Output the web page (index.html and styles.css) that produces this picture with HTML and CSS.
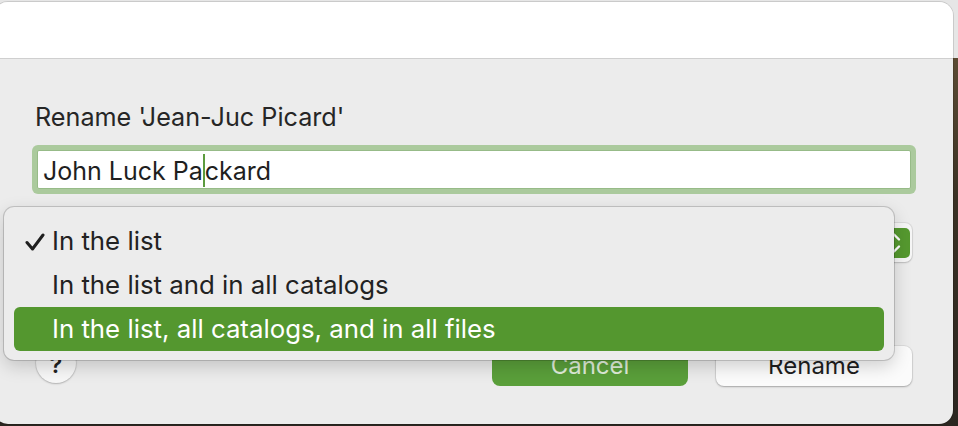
FILE: index.html
```html
<!DOCTYPE html>
<html>
<head>
<meta charset="utf-8">
<link rel="stylesheet" href="styles.css">
</head>
<body>
<div class="window">
  <div class="titlebar"></div>
  <div class="content">
    <div class="label">Rename 'Jean-Juc Picard'</div>
    <div class="field">John Luck Pa<span class="caret"></span>ckard</div>
    <div class="popup-row">
      <div class="popup">
        <div class="arrows">
          <svg width="32" height="30" viewBox="0 0 32 30"><path d="M11 11.5 L16 6.5 L21 11.5 M11 18.5 L16 23.5 L21 18.5" fill="none" stroke="#fff" stroke-width="2.4" stroke-linecap="round" stroke-linejoin="round"/></svg>
        </div>
      </div>
    </div>
    <div class="buttons">
      <div class="help">?</div>
      <div class="spacer"></div>
      <div class="btn cancel">Cancel</div>
      <div class="btn rename">Rename</div>
    </div>
  </div>
  <div class="menu">
    <div class="item"><svg class="check" width="20" height="18" viewBox="0 0 20 18"><path d="M2 9.5 L7.5 16 L18 2" fill="none" stroke="#1f1f1f" stroke-width="3" stroke-linecap="round" stroke-linejoin="round"/></svg>In the list</div>
    <div class="item">In the list and in all catalogs</div>
    <div class="item selected">In the list, all catalogs, and in all files</div>
  </div>
</div>
</body>
</html>
```
FILE: styles.css
```css
html, body {
  margin: 0;
  padding: 0;
}
body {
  width: 958px;
  height: 426px;
  overflow: hidden;
  background: linear-gradient(to bottom, #e6e6e6 0, #e6e6e6 58px, #5b4b33 58px, #3a3124 200px, #2b2620 426px);
  font-family: "Inter", "Noto Sans", sans-serif;
}
.window {
  position: relative;
  margin: 2px 0 0 -6px;
  width: 959px;
  height: 422px;
  border-radius: 14px;
  overflow: hidden;
  background: #ececec;
  box-shadow: 0 0 0 1px rgba(0,0,0,0.12);
}
.titlebar {
  height: 56px;
  background: #ffffff;
  border-bottom: 1px solid #cfcfcf;
}
.content {
  padding: 0 41px 0 43px;
  display: flex;
  flex-direction: column;
}
.label {
  margin-top: 43px;
  margin-left: -2px;
  font-size: 25.2px;
  line-height: 30px;
  color: #262626;
}
.field {
  margin-top: 18px;
  margin-right: 1px;
  height: 37px;
  background: #fff;
  border: 1px solid #97bb88;
  border-radius: 2px;
  box-shadow: 0 0 0 5px #abca9d;
  padding-left: 5px;
  font-size: 25px;
  line-height: 40px;
  color: #1f1f1f;
  white-space: nowrap;
}
.caret {
  display: inline-block;
  width: 2px;
  height: 33px;
  background: #5c9b3e;
  vertical-align: -7px;
}
.popup-row {
  margin-top: 34px;
  display: flex;
}
.popup {
  flex: 1;
  height: 39px;
  border-radius: 7px;
  background: #f6f6f6;
  box-shadow: 0 0 0 1px rgba(0,0,0,0.07), 0 1px 2px rgba(0,0,0,0.15);
  display: flex;
  align-items: center;
  justify-content: flex-end;
  padding-right: 2px;
}
.arrows {
  width: 32px;
  height: 30px;
  border-radius: 5px;
  background: #55992f;
  display: flex;
}
.buttons {
  margin-top: 84px;
  display: flex;
  align-items: center;
  height: 40px;
}
.help {
  box-sizing: border-box;
  width: 40px;
  height: 40px;
  margin-left: -1px;
  margin-top: -6px;
  padding-top: 5px;
  border-radius: 50%;
  background: #f7f7f7;
  box-shadow: 0 0 0 1px rgba(0,0,0,0.06), 0 1px 2px rgba(0,0,0,0.2);
  text-align: center;
  font-size: 23px;
  font-weight: 600;
  line-height: 35px;
  color: #222;
}
.spacer {
  flex: 1;
}
.btn {
  width: 196px;
  height: 40px;
  border-radius: 8px;
  text-align: center;
  font-size: 24px;
  line-height: 40px;
}
.cancel {
  background: #5a9f3a;
  color: rgba(255,255,255,0.82);
  margin-right: 28px;
}
.rename {
  background: #fbfbfb;
  color: #1e1e1e;
  box-shadow: 0 0 0 1px rgba(0,0,0,0.06), 0 1px 2px rgba(0,0,0,0.25);
}
.menu {
  position: absolute;
  left: 10px;
  top: 205px;
  width: 870px;
  padding: 12px 10px 9px 10px;
  background: #ececec;
  border-radius: 10px;
  box-shadow: 0 0 0 1px rgba(0,0,0,0.16), 0 6px 18px rgba(0,0,0,0.18);
}
.item {
  position: relative;
  height: 44px;
  padding-left: 38px;
  font-size: 25.8px;
  line-height: 44px;
  color: #222;
  border-radius: 6px;
  white-space: nowrap;
}
.item.selected {
  background: #54972f;
  color: #fff;
}
.check {
  position: absolute;
  left: 11px;
  top: 14px;
}
```
